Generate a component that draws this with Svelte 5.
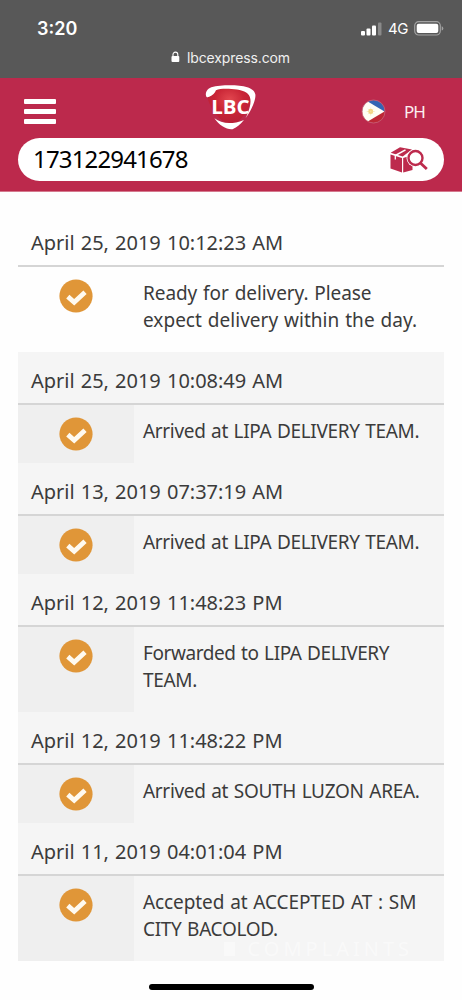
<script lang="ts">
	type Line = { text: string; tracking: number };
	type Entry = { date: string; lines: Line[] };

	const trackingNumber = '173122941678';

	const entries: Entry[] = [
		{
			date: 'April 25, 2019 10:12:23 AM',
			lines: [
				{ text: 'Ready for delivery. Please', tracking: -0.07 },
				{ text: 'expect delivery within the day.', tracking: 0.02 }
			]
		},
		{ date: 'April 25, 2019 10:08:49 AM', lines: [{ text: 'Arrived at LIPA DELIVERY TEAM.', tracking: -0.33 }] },
		{ date: 'April 13, 2019 07:37:19 AM', lines: [{ text: 'Arrived at LIPA DELIVERY TEAM.', tracking: -0.33 }] },
		{
			date: 'April 12, 2019 11:48:23 PM',
			lines: [
				{ text: 'Forwarded to LIPA DELIVERY', tracking: -0.42 },
				{ text: 'TEAM.', tracking: -0.3 }
			]
		},
		{ date: 'April 12, 2019 11:48:22 PM', lines: [{ text: 'Arrived at SOUTH LUZON AREA.', tracking: -0.31 }] },
		{
			date: 'April 11, 2019 04:01:04 PM',
			lines: [
				{ text: 'Accepted at ACCEPTED AT : SM', tracking: -0.09 },
				{ text: 'CITY BACOLOD.', tracking: -0.32 }
			]
		}
	];
</script>

<div class="screen">
	<div class="browser-bar">
		<div class="status">
			<span class="time">3:20</span>
			<div class="status-right">
				<svg class="signal" width="21" height="14" viewBox="0 0 21 14" fill="#fff">
					<rect x="0" y="9" width="4" height="4.5" rx="1" />
					<rect x="5.5" y="6.5" width="4" height="7" rx="1" />
					<rect x="11" y="3.5" width="4" height="10" rx="1" />
					<rect x="17" y="0.5" width="3.5" height="13" rx="1" opacity="0.3" />
				</svg>
				<span class="network">4G</span>
				<svg class="battery" width="30" height="15" viewBox="0 0 30 15">
					<rect x="0.7" y="0.7" width="25.6" height="13.3" rx="4" fill="none" stroke="#a2a2a2" stroke-width="1.2" />
					<rect x="2.7" y="2.7" width="21.6" height="9.4" rx="2" fill="#fff" />
					<path d="M27.7 5.2q1.6.5 1.6 2.2t-1.6 2.2z" fill="#a2a2a2" />
				</svg>
			</div>
		</div>
		<div class="address">
			<svg width="9" height="12" viewBox="0 0 9 12">
				<path d="M2 5.5V3.5a2.4 2.4 0 0 1 4.8 0v2" fill="none" stroke="#fff" stroke-width="1.1" />
				<rect x="0.5" y="5" width="7.8" height="6" rx="1" fill="#fff" />
			</svg>
			<span>lbcexpress.com</span>
		</div>
	</div>

	<header>
		<div class="nav">
			<div class="burger"><i></i><i></i><i></i></div>
			<svg class="logo" width="56" height="50" viewBox="0 0 54 48">
				<defs>
					<radialGradient id="badge" cx="50%" cy="30%" r="65%">
						<stop offset="0" stop-color="#e2474f" />
						<stop offset="0.5" stop-color="#c92536" />
						<stop offset="1" stop-color="#b61f38" />
					</radialGradient>
				</defs>
				<path d="M5 8Q26-1 47 8Q47 27 28 41Q9 32 4 12Z" fill="url(#badge)" />
				<path d="M3 11.5C2 8 4 4.500 8 3C18 0.500 34 0.500 42.700 3C47 4.500 49.500 6 50.500 10C51 15 47.500 24 41 33C43.500 28 46.500 20 45.700 14.500C45 9 40 6.500 32.700 5.300C26 4.300 17 4 12.500 5.800C11.500 8.500 9.500 10.500 6 12.300C4.500 13 3.200 12.800 3 11.500Z" fill="#fff" />
				<path d="M11 33C18 38 27 39.500 39.500 34.500C36 38.500 33 41.500 28.500 43.500C24 44.500 15.500 40 11 33Z" fill="#fff" />
				<text x="8" y="28.5" textLength="37" lengthAdjust="spacingAndGlyphs">LBC</text>
			</svg>
			<div class="country">
				<svg width="25" height="25" viewBox="0 0 25 25">
					<defs>
						<clipPath id="round"><circle cx="12.5" cy="12.5" r="11.3" /></clipPath>
					</defs>
					<g clip-path="url(#round)">
						<rect width="25" height="12.5" fill="#3464b4" />
						<rect y="12.5" width="25" height="12.5" fill="#bd2735" />
						<path d="M0-1.5L23.5 12.5L0 26.5Z" fill="#fffdf5" />
						<circle cx="9.7" cy="12.5" r="2.4" fill="#f1cb67" />
						<path d="M9.7 8.5v8M5.7 12.5h8M7 9.8l5.4 5.4M12.4 9.8L7 15.2" stroke="#f5dfa5" stroke-width="0.6" />
					</g>
					<circle cx="12.5" cy="12.5" r="11.5" fill="none" stroke="#c96678" stroke-width="0.8" />
				</svg>
				<span>PH</span>
			</div>
		</div>
		<div class="search">
			<span>{trackingNumber}</span>
			<svg width="38" height="28" viewBox="0 0 38 28">
				<g fill="#bd2b4d">
					<path d="M.5 8.5L12 12V26.500L.5 22.500Z" />
					<path d="M13.200 12L22.500 9V24L13.200 26.500Z" />
					<path d="M.7 6.800L10 1.300L22 3.500L12.700 10.500Z" />
				</g>
				<path d="M5.300 9.500L15.500 3.800" stroke="#fff" stroke-width="1.5" />
				<path d="M5.300 9V13.500" stroke="#fff" stroke-width="1.3" />
				<circle cx="25.5" cy="12" r="9" fill="#fff" />
				<circle cx="25.5" cy="12" r="7" fill="#fff" stroke="#bd2b4d" stroke-width="2.4" />
				<path d="M30.400 16.900L36.800 23" stroke="#bd2b4d" stroke-width="2.8" />
			</svg>
		</div>
	</header>

	<main>
		{#each entries as entry, i}
			<section class:past={i > 0}>
				<h2><span>{entry.date}</span></h2>
				<div class="row">
					<div class="mark">
						<svg width="34" height="34" viewBox="0 0 34 34">
							<circle cx="17" cy="17" r="16.6" fill="#e09638" />
							<path d="M8.800 17.600L15.200 23.300L26 13.200" fill="none" stroke="#fffaf0" stroke-width="4.8" />
						</svg>
					</div>
					<p>
						{#each entry.lines as line}
							<span style:letter-spacing="{line.tracking}px">{line.text}</span>
						{/each}
					</p>
				</div>
			</section>
		{/each}
		<div class="watermark"><i></i><span>COMPLAINTS</span></div>
	</main>

	<div class="home"></div>
</div>

<style>
	:global(body) {
		background: #fefefe;
	}

	.screen {
		width: 462px;
		height: 1000px;
		overflow: hidden;
		display: flex;
		flex-direction: column;
		background: #fefefe;
		font-family: 'Trebuchet MS', 'Noto Sans', sans-serif;
		color: #3b3b3b;
	}

	.browser-bar {
		box-sizing: border-box;
		height: 78px;
		flex-shrink: 0;
		padding-top: 17px;
		background: #585858;
		color: #fff;
		font-family: Inter, sans-serif;
	}

	.status {
		display: flex;
		justify-content: space-between;
		align-items: center;
		height: 23px;
		padding: 0 18px 0 37px;
	}

	.time {
		font-size: 18px;
		font-weight: 600;
	}

	.status-right {
		display: flex;
		align-items: center;
	}

	.network {
		margin: 0 6px 0 6px;
		font-size: 15px;
		letter-spacing: -0.4px;
	}

	.address {
		display: flex;
		align-items: center;
		gap: 7px;
		height: 20px;
		margin-top: 7px;
		padding-left: 171px;
		font-size: 14px;
		letter-spacing: -0.12px;
		color: #f0f0f0;
	}

	header {
		box-sizing: border-box;
		height: 114px;
		flex-shrink: 0;
		padding: 0 18px;
		background: #bc294c;
		border-bottom: 1px solid #d5798e;
	}

	.nav {
		display: grid;
		grid-template-columns: 185px 55px 1fr;
		align-items: start;
		height: 60px;
	}

	.burger {
		display: flex;
		flex-direction: column;
		gap: 5px;
		padding: 21px 0 0 6px;
	}

	.burger i {
		width: 32px;
		height: 5px;
		border-radius: 1px;
		background: #fff;
	}

	.logo {
		margin-top: 6px;
	}

	.logo text {
		font-family: 'Open Sans', sans-serif;
		font-size: 18px;
		font-weight: 700;
		fill: #fff;
	}

	.country {
		display: flex;
		align-items: center;
		gap: 18px;
		height: 25px;
		margin: 21px 0 0 103px;
		color: #fbeef1;
		font-size: 17px;
		letter-spacing: -1px;
	}

	.search {
		box-sizing: border-box;
		display: flex;
		align-items: center;
		justify-content: space-between;
		height: 43px;
		padding: 0 16px 0 15px;
		border-radius: 22px;
		background: #fff;
		color: #000;
		font-size: 24px;
		letter-spacing: -0.85px;
	}

	.search span {
		margin-top: -2px;
	}

	main {
		width: 426px;
		margin: 22px 0 0 18px;
		position: relative;
	}

	.past {
		background: #f5f5f5;
	}

	h2 {
		box-sizing: border-box;
		height: 53px;
		margin: 0;
		padding: 15px 0 0 13px;
		border-bottom: 2px solid #d5d5d5;
		font-size: 20px;
		font-weight: 400;
		line-height: 27px;
		letter-spacing: -0.02px;
		word-spacing: 1px;
		white-space: nowrap;
	}

	.row {
		display: flex;
	}

	.mark {
		width: 116px;
		flex-shrink: 0;
		padding-top: 12px;
		text-align: center;
	}

	.past .mark {
		background: #efefef;
	}

	p {
		margin: 0;
		padding: 13px 0 18px 9px;
		font-size: 19px;
		line-height: 27px;
		word-spacing: 1px;
		white-space: nowrap;
	}

	p span {
		display: block;
	}

	.watermark {
		position: absolute;
		right: 31px;
		bottom: 2px;
		display: flex;
		align-items: center;
		gap: 13px;
		color: #fff;
		font-size: 20px;
		line-height: 20px;
		letter-spacing: 4px;
		opacity: 0.45;
	}

	.watermark i {
		width: 11px;
		height: 14px;
		background: #fff;
	}

	.home {
		width: 165px;
		height: 6px;
		margin: 23px 0 0 149px;
		border-radius: 3px;
		background: #000;
	}
</style>
